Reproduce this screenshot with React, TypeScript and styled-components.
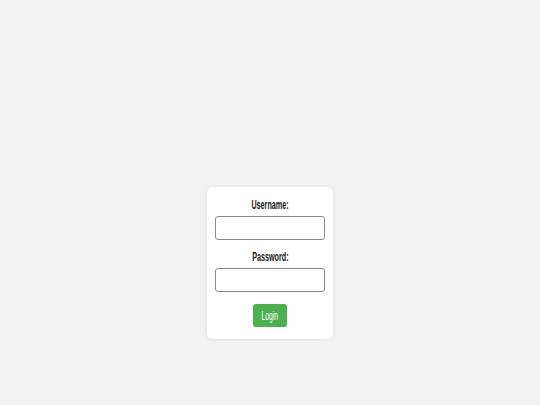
import React from 'react'
import styled, { createGlobalStyle } from 'styled-components'

const GlobalStyle = createGlobalStyle`
  html, body {
    margin: 0;
    padding: 0;
    background: #f2f2f2;
    font-family: "Liberation Sans", Arial, sans-serif;
  }
`

const Page = styled.main`
  display: flex;
  justify-content: center;
  align-items: flex-start;
  min-height: 405px;
  padding-top: 187px;
  box-sizing: border-box;
`

const Card = styled.form`
  width: 126px;
  box-sizing: border-box;
  padding: 11px 8px 12px;
  background: #ffffff;
  border-radius: 6px;
  box-shadow: 0 0 4px rgba(0, 0, 0, 0.08);
  display: flex;
  flex-direction: column;
  align-items: center;
`

// the text in this form is drawn very condensed
const Narrow = styled.span<{ $scale?: number }>`
  display: inline-block;
  transform: scaleX(${({ $scale }) => $scale ?? 0.6});
  transform-origin: center;
`

const Label = styled.label<{ $gap?: number }>`
  display: block;
  font-size: 12px;
  line-height: 14px;
  font-weight: bold;
  color: #1a1a1a;
  margin-top: ${({ $gap }) => $gap ?? 0}px;
  margin-bottom: 4px;
`

const Input = styled.input`
  width: 110px;
  height: 24px;
  box-sizing: border-box;
  border: 1px solid #8a8a8a;
  border-radius: 3px;
  background: #fff;
  padding: 0 4px;
  font-size: 10px;
`

const Button = styled.button`
  margin-top: 12px;
  width: 34px;
  height: 23px;
  border: none;
  border-radius: 3px;
  background: #4caf50;
  color: #fff;
  font-family: inherit;
  font-size: 12px;
  padding: 0;
`

const App: React.FC = () => {
  return (
    <>
      <GlobalStyle />
      <Page>
        <Card onSubmit={(e) => e.preventDefault()}>
          <Label htmlFor="username"><Narrow>Username:</Narrow></Label>
          <Input id="username" type="text" />
          <Label htmlFor="password" $gap={10}><Narrow>Password:</Narrow></Label>
          <Input id="password" type="password" />
          <Button type="submit"><Narrow $scale={0.56}>Login</Narrow></Button>
        </Card>
      </Page>
    </>
  )
}

export default App
